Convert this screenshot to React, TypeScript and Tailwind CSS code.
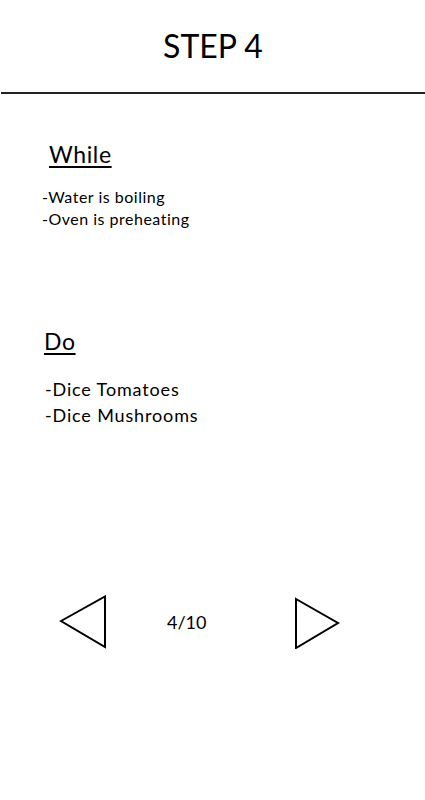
import React from "react";

export default function App() {
  return (
    <div className="w-[425px] h-[800px] bg-white text-black font-['Lato',sans-serif]">
      <div className="h-[92px] pt-[30px] text-center text-[32px] leading-[32px] pl-[1px]">STEP 4</div>
      <div className="h-[2px] ml-[1px] bg-[#222]" />
      <div className="pl-[49px] mt-[49px] text-[23px] leading-[22px] tracking-[0.6px]">
        <span className="underline decoration-[1.5px] underline-offset-[3px]">While</span>
      </div>
      <div className="pl-[42px] mt-[21px] text-[16px] leading-[22px] tracking-[0.5px]">
        <div>-Water is boiling</div>
        <div>-Oven is preheating</div>
      </div>
      <div className="pl-[44px] mt-[100px] text-[23px] leading-[22px] tracking-[0.6px]">
        <span className="underline decoration-[1.5px] underline-offset-[3px]">Do</span>
      </div>
      <div className="pl-[45px] mt-[24px] text-[18px] leading-[26px] tracking-[0.85px]">
        <div>-Dice Tomatoes</div>
        <div>-Dice Mushrooms</div>
      </div>
      <div className="flex items-center pl-[59px] mt-[167px] h-[54px]">
        <svg width="48" height="54" viewBox="0 0 48 54">
          <polygon points="2,26 46,1.5 46,52" fill="none" stroke="black" strokeWidth="2" strokeLinejoin="miter" />
        </svg>
        <div className="w-[187px] pl-[60px] text-[18px] leading-[18px] -mt-[1px]">4/10</div>
        <svg width="48" height="54" viewBox="0 0 48 54">
          <polygon points="2,4 44,28 2,53" fill="none" stroke="black" strokeWidth="2" strokeLinejoin="miter" />
        </svg>
      </div>
    </div>
  );
}
